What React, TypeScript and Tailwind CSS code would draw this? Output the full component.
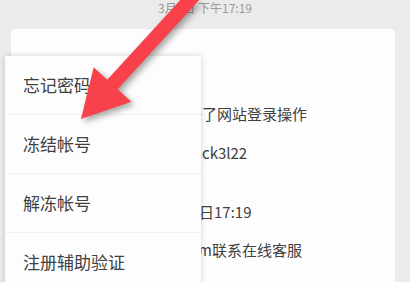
import React from 'react';

const menuItems = ['忘记密码', '冻结帐号', '解冻帐号', '注册辅助验证'];

const cardLines = [
  { hidden: '于', shown: '了网站登录操作', mt: 'mt-[75px]', ml: '' },
  { hidden: 'ta', shown: 'ck3l22', mt: 'mt-[19px]', ml: '' },
  { hidden: '3月4', shown: '日17:19', mt: 'mt-[39px]', ml: '-ml-[3px]' },
  { hidden: 'qq.co', shown: 'm联系在线客服', mt: 'mt-[18px]', ml: '-ml-[4px]' },
];

const Arrow: React.FC = () => (
  <svg
    className="absolute left-0 top-0 pointer-events-none"
    width="410"
    height="282"
    viewBox="0 0 410 282"
    style={{ filter: 'drop-shadow(3px 3px 3px rgba(0,0,0,0.35))' }}
  >
    <polygon
      points="201.7,-23.5 107.3,79.8 93.7,67.3 81,119 131.3,101.7 117.7,89.2 212.1,-14.1"
      fill="#f8414a"
    />
  </svg>
);

export default function App() {
  return (
    <div
      className="relative w-[410px] h-[282px] overflow-hidden bg-[#ebebeb]"
      style={{ fontFamily: '"Noto Sans CJK SC", "Noto Sans", sans-serif' }}
    >
      <div className="h-[29px] text-center text-[12px] leading-[15px] text-[#9a9a9a]">
        3月4日 下午17:19
      </div>

      <div className="mx-[11px] w-[384px] h-[270px] rounded-[4px] bg-[#fdfdfd] pl-[11px] pr-[15px] flex flex-col text-[15px] leading-[20px] text-[#404040]">
        {cardLines.map((line, i) => (
          <div key={i} className={`${line.mt} flex whitespace-nowrap`}>
            <span className="w-[180px] shrink-0 overflow-hidden text-right">{line.hidden}</span>
            <span className={line.ml}>{line.shown}</span>
          </div>
        ))}
        <div className="mt-auto mb-[2px] ml-[189px] w-[180px] h-[1px] bg-[#eeeeee]" />
      </div>

      <div className="absolute left-[5px] top-[56px] w-[196px] bg-[#fdfdfd] shadow-[0_0_6px_rgba(0,0,0,0.18)]">
        {menuItems.map((item) => (
          <div
            key={item}
            className="h-[59px] border-b border-[#f0f0f0] pl-[18px] flex items-center text-[17px] text-[#404040]"
          >
            {item}
          </div>
        ))}
      </div>

      <Arrow />
    </div>
  );
}
